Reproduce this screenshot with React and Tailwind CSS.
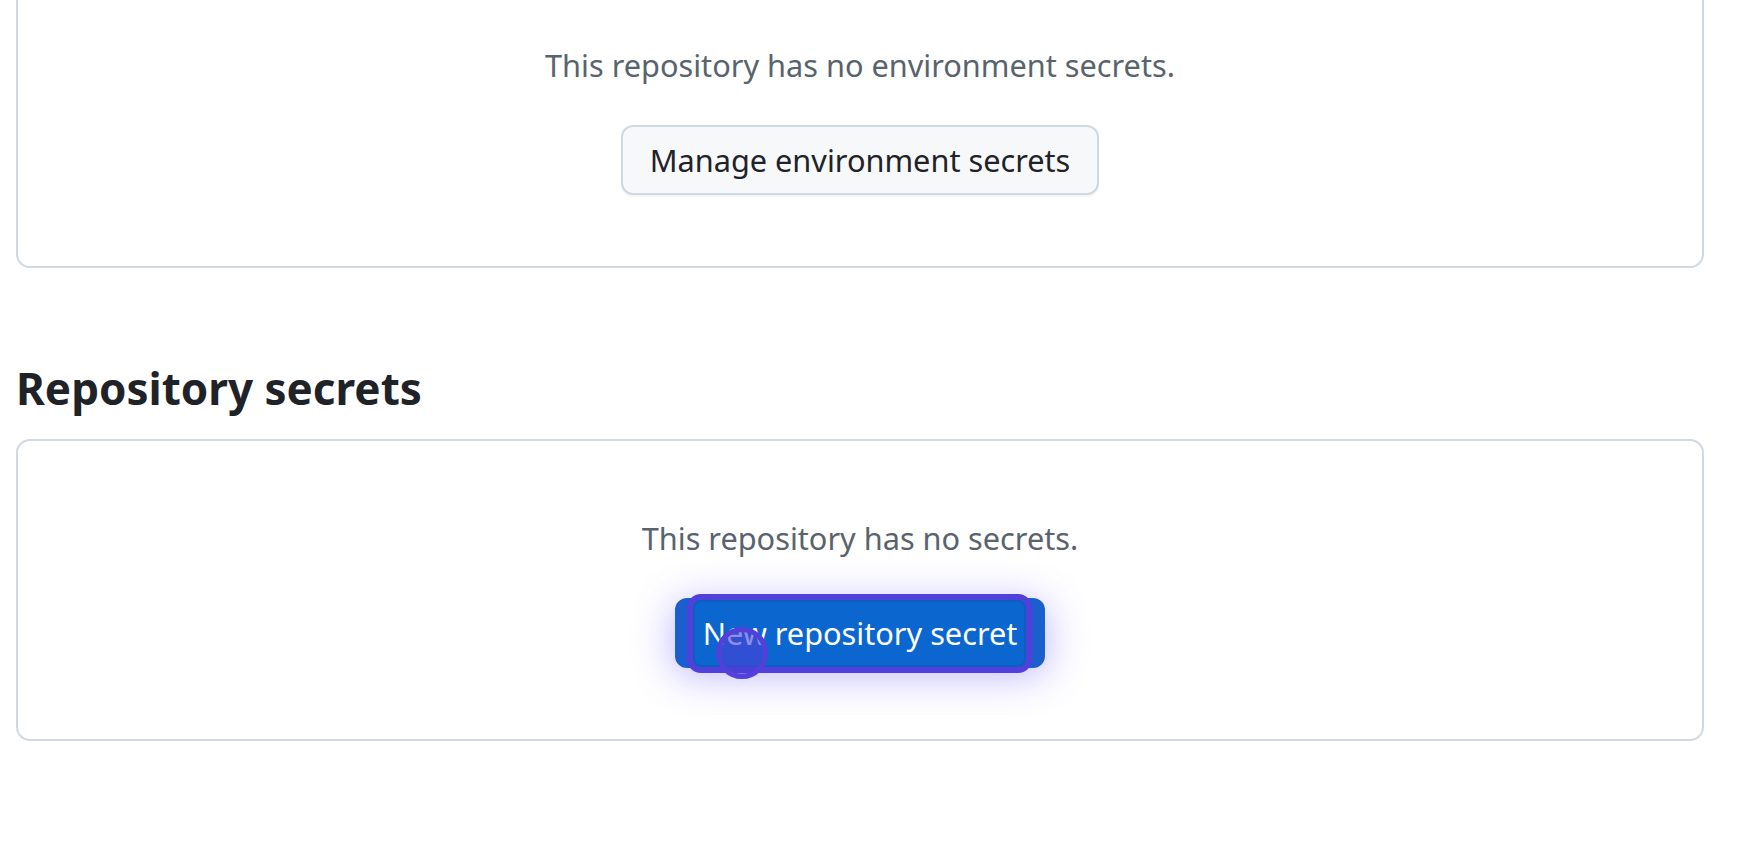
import React from "react";

// Empty-state card used for both secret sections
function EmptyCard({ message, children, className = "" }) {
  return (
    <div
      className={
        "flex flex-col items-center rounded-[14px] border-2 border-[#d1d9e0] bg-white pt-[73px] pb-[71px] " +
        className
      }
    >
      <p className="text-[30.7px] leading-[48px] text-[#59636e]">{message}</p>
      <div className="mt-[36px]">{children}</div>
    </div>
  );
}

export default function App() {
  return (
    <div
      className="min-h-screen overflow-hidden bg-white"
      style={{ fontFamily: '"Noto Sans", "Open Sans", sans-serif' }}
    >
      <div className="w-[1704px] pl-[16px]">
        <EmptyCard message="This repository has no environment secrets." className="-mt-[34px]">
          <button className="flex h-[70px] items-center rounded-[12px] border-2 border-[#d1d9e0] bg-[#f6f8fa] px-[27px] text-[30.7px] text-[#1f2328] shadow-[0_2px_0_rgba(31,35,40,0.04)]">
            Manage environment secrets
          </button>
        </EmptyCard>

        <h2 className="mt-[88px] mb-[19px] text-[44px] font-bold leading-[64px] text-[#1f2328]">
          Repository secrets
        </h2>

        <EmptyCard message="This repository has no secrets.">
          <div className="relative">
            <button className="flex h-[70px] items-center rounded-[12px] bg-[#1b5fce] px-[28px] text-[30.7px] text-white shadow-[0_6px_40px_rgba(98,80,255,0.45)]">
              <span className="relative">New repository secret</span>
            </button>
            {/* highlight overlay drawn on top of the button */}
            <div className="pointer-events-none absolute -top-[4px] left-[12px] right-[13px] -bottom-[5px] rounded-[14px] border-[6px] border-[#5140d9]">
              <div className="h-full w-full rounded-[8px] border-2 border-[#0c5fc0] bg-[#0b66cf]" />
            </div>
            <span className="pointer-events-none absolute left-[28px] top-0 flex h-[70px] items-center text-[30.7px] text-white">
              New repository secret
            </span>
            <div className="pointer-events-none absolute left-[41px] top-[29px] h-[52px] w-[52px] rounded-full border-[5px] border-[#5140d9] bg-[#4a3fd6]/60" />
          </div>
        </EmptyCard>
      </div>
    </div>
  );
}
